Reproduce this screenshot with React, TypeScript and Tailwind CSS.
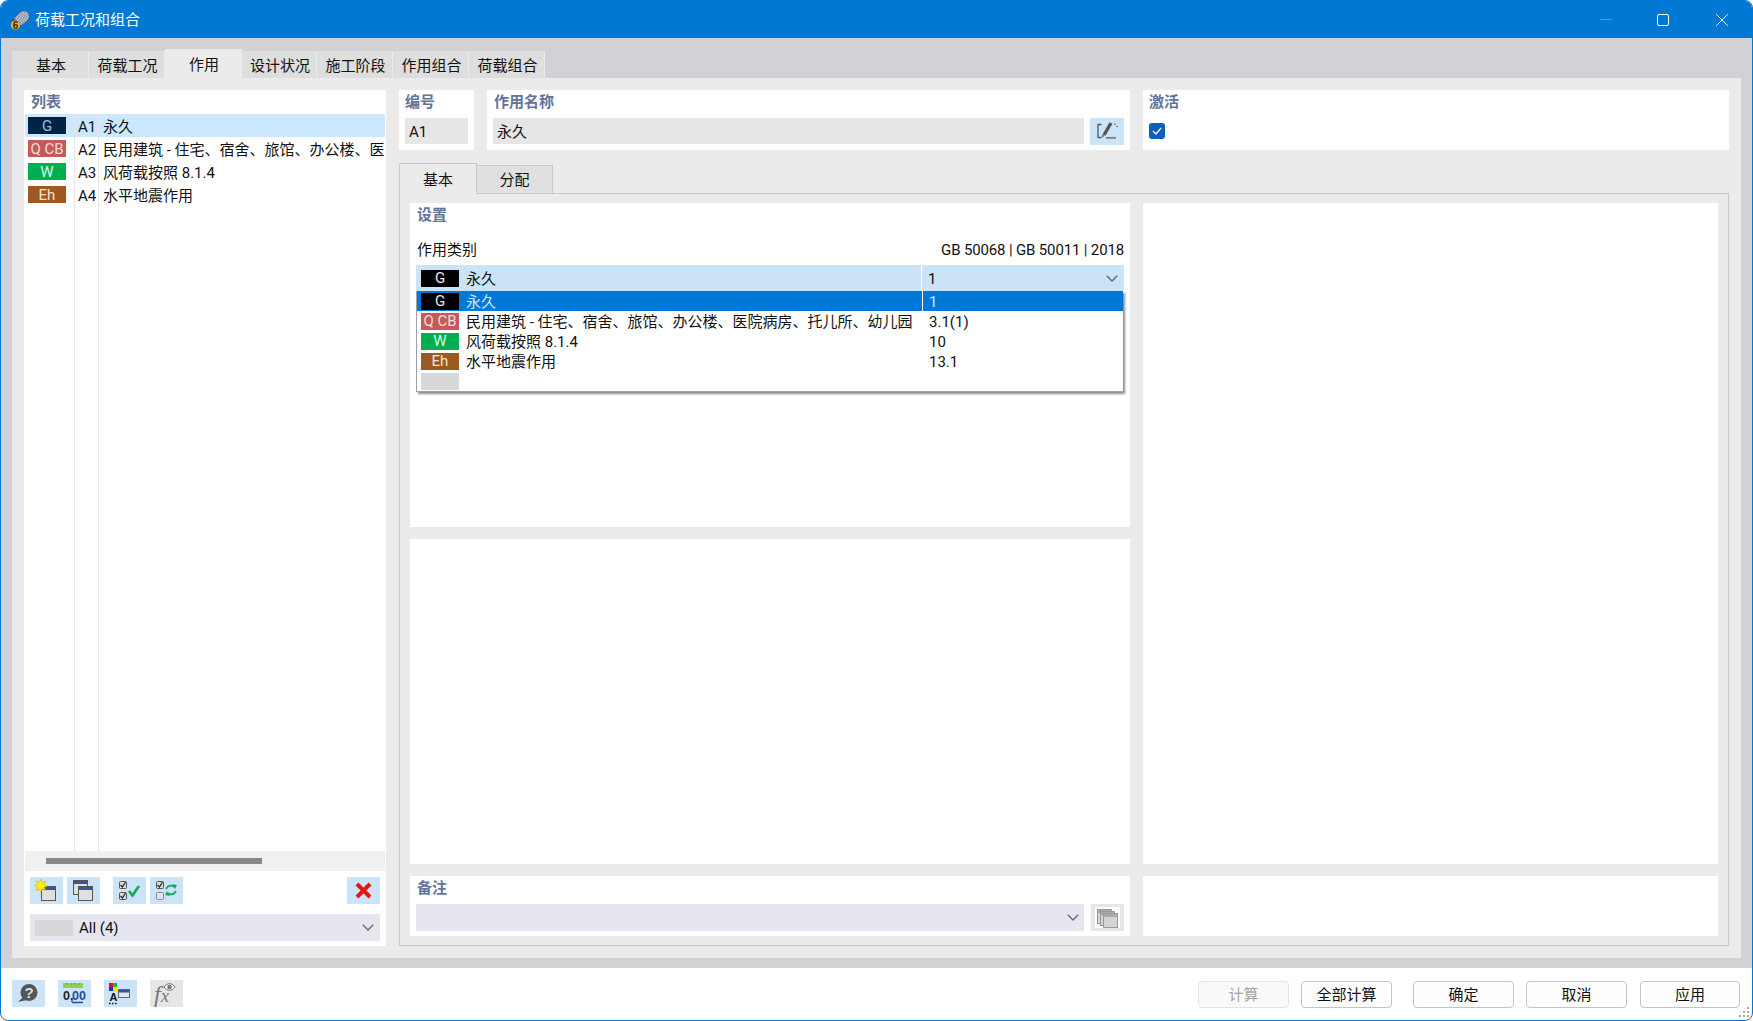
import { X } from "lucide-react";
import type { ReactNode } from "react";

type ActionRow = {
  code: string;
  id: string;
  list: string;
  name: string;
  swatch: string;
  value: string;
};

const rows: ActionRow[] = [
  { code: "G", id: "A1", list: "bg-[#002346] text-[#8ec4f2]", name: "永久", swatch: "bg-black text-[#e8e8e8]", value: "1" },
  { code: "Q CB", id: "A2", list: "bg-[#c55a5a] text-[#f8dcdc]", name: "民用建筑 - 住宅、宿舍、旅馆、办公楼、医院病房、托儿所、幼儿园", swatch: "bg-[#c55a5a] text-[#f8dcdc]", value: "3.1(1)" },
  { code: "W", id: "A3", list: "bg-[#00b050] text-[#dcf7e6]", name: "风荷载按照 8.1.4", swatch: "bg-[#00b050] text-[#dcf7e6]", value: "10" },
  { code: "Eh", id: "A4", list: "bg-[#9c5a22] text-[#f5e2cc]", name: "水平地震作用", swatch: "bg-[#9c5a22] text-[#f5e2cc]", value: "13.1" },
];

const mainTabs = [
  { label: "基本", cls: "w-[77px] h-[27px] bg-[#dedede]" },
  { label: "荷载工况", cls: "w-[76px] h-[27px] bg-[#dedede]" },
  { label: "作用", cls: "w-[77px] h-[29px] bg-[#ebebeb]" },
  { label: "设计状况", cls: "w-[75px] h-[27px] bg-[#dedede]" },
  { label: "施工阶段", cls: "w-[76px] h-[27px] bg-[#dedede]" },
  { label: "作用组合", cls: "w-[76px] h-[27px] bg-[#dedede]" },
  { label: "荷载组合", cls: "w-[76px] h-[27px] bg-[#dedede]" },
];

function Heading({ children }: { children: ReactNode }) {
  return <div className="h-[26px] leading-[24px] font-semibold text-[#64739a]">{children}</div>;
}

function Chevron() {
  return (
    <svg width="12" height="7" viewBox="0 0 12 7" fill="none" stroke="#666" strokeWidth="1.3">
      <path d="M.8.8 6 6l5.200-5.200" />
    </svg>
  );
}

function MiniWindow({ x, y, faded }: { x: number; y: number; faded?: boolean }) {
  return (
    <g>
      <rect x={x + 0.5} y={y + 0.5} width="14" height="14" fill={faded ? "#d4d4d4" : "#dfdfdf"} stroke={faded ? "#999" : "#555"} />
      <rect x={x + 1} y={y + 1} width="13" height="3" fill={faded ? "#aaa" : "#3f51a5"} />
    </g>
  );
}

function MiniCheck({ x, y, on = true }: { x: number; y: number; on?: boolean }) {
  return (
    <g>
      <rect x={x + 0.5} y={y + 0.5} width="7" height="7" rx="1" fill={on ? "#dcdcdc" : "#dde6ee"} stroke={on ? "#555" : "#888"} />
      {on && <path d={`M${x + 1.5} ${y + 4}l2 2 3-5`} fill="none" stroke="#222" strokeWidth="1.2" />}
    </g>
  );
}

function IconButton({ children, muted }: { children: ReactNode; muted?: boolean }) {
  return (
    <button className={`block h-[27px] w-[33px] shrink-0 ${muted ? "bg-[#e6e6e6]" : "bg-[#cce4f7]"}`}>
      <svg width="33" height="27" viewBox="0 0 33 27" className="block">
        {children}
      </svg>
    </button>
  );
}

function Swatch({ code, cls }: { code?: string; cls: string }) {
  return (
    <span className={`flex h-[17px] w-[38px] shrink-0 items-center justify-center pt-[1px] text-[15px] leading-none ${cls}`}>
      {code}
    </span>
  );
}

function AppIcon() {
  return (
    <svg width="20" height="20" viewBox="0 0 20 20">
      <defs>
        <pattern id="mesh" width="2.2" height="2.2" patternUnits="userSpaceOnUse" patternTransform="rotate(35)">
          <rect width="2.2" height="2.2" fill="#c3cbdc" />
          <path d="M0 0h2.2M0 0v2.2" stroke="#56627c" strokeWidth="0.7" />
        </pattern>
      </defs>
      <path d="M3 9 11 1.500c2.500-1.500 6-.5 7.500 2s1 5-.6 6.500L11 16Z" fill="url(#mesh)" stroke="#3c4456" strokeWidth="0.5" />
      <path d="M3 9c2.500-.5 7 3 8 7-2 1-6 1-7.500-1S2 10 3 9Z" fill="#3c4150" />
      <circle cx="5.500" cy="15" r="4.700" fill="#e3b52a" />
      <text x="5.500" y="18.500" textAnchor="middle" fontSize="10" fontWeight="700" fill="#2e2606" fontFamily="'Liberation Sans', sans-serif">6</text>
    </svg>
  );
}

function ListPanel() {
  return (
    <div className="flex w-[362px] shrink-0 flex-col bg-white">
      <div className="h-[24px] pl-[7px] leading-[24px] font-semibold text-[#64739a]">列表</div>
      <div className="flex flex-1 px-[1px]">
        <div className="w-[50px] shrink-0 border-r border-[#e2e6ea]">
          {rows.map((row, i) => (
            <div key={row.id} className={`flex h-[23px] items-center pl-[3px] ${i === 0 ? "bg-[#cce8ff]" : ""}`}>
              <Swatch code={row.code} cls={row.list} />
            </div>
          ))}
        </div>
        <div className="w-[24px] shrink-0 border-r border-[#e2e6ea]">
          {rows.map((row, i) => (
            <div key={row.id} className={`flex h-[23px] items-center justify-center pl-[1px] pt-[2px] ${i === 0 ? "bg-[#cce8ff]" : ""}`}>
              {row.id}
            </div>
          ))}
        </div>
        <div className="min-w-0 flex-1 overflow-hidden">
          {rows.map((row, i) => (
            <div key={row.id} className={`flex h-[23px] items-center whitespace-nowrap pl-[4px] pt-[2px] ${i === 0 ? "bg-[#cce8ff]" : ""}`}>
              {row.name}
            </div>
          ))}
        </div>
      </div>
      <div className="mx-[1px] flex h-[20px] items-center bg-[#f0f0f0] pl-[21px]">
        <div className="h-[6px] w-[216px] bg-[#888888]" />
      </div>
      <div className="flex h-[33px] px-[6px] pt-[6px]">
        <div className="flex gap-[4px]">
          <IconButton>
            <MiniWindow x={11} y={9} />
            <path d="M11 2l1.300 3.400 3.400-1.300-1.500 3.300 3.300 1.500-3.300 1.300 1.300 3.400-3.400-1.500-1.400 3.300-1.300-3.300-3.400 1.300 1.500-3.400-3.300-1.400 3.300-1.300-1.300-3.400 3.300 1.500z" fill="#fff200" stroke="#c9a800" strokeWidth="0.5" />
          </IconButton>
          <IconButton>
            <MiniWindow x={6} y={3} />
            <MiniWindow x={11} y={9} />
          </IconButton>
        </div>
        <div className="ml-[13px] flex gap-[4px]">
          <IconButton>
            <MiniCheck x={6} y={4} />
            <MiniCheck x={6} y={15} />
            <path d="M16 14l3.500 4.500L26 9" fill="none" stroke="#1aa85f" strokeWidth="2.800" />
          </IconButton>
          <IconButton>
            <MiniCheck x={6} y={4} />
            <MiniCheck x={6} y={15} on={false} />
            <path d="M16 12c2-4 6-4 8-2M26 14c-2 4-6 4-8 2" fill="none" stroke="#1aa85f" strokeWidth="1.800" />
            <path d="M22 7l5 1-2 4zM20 19l-5-1 2-4z" fill="#1aa85f" />
          </IconButton>
        </div>
        <div className="ml-auto flex">
          <IconButton>
            <path d="M10 7l13 13M23 7 10 20" stroke="#ee1111" strokeWidth="4" />
          </IconButton>
        </div>
      </div>
      <div className="mx-[6px] mt-[10px] mb-[5px] flex h-[27px] items-center bg-[#e6e6f0] pl-[5px] pr-[6px]">
        <span className="h-[16px] w-[38px] bg-[#d8d8d8]" />
        <span className="ml-[6px]">All (4)</span>
        <span className="ml-auto flex"><Chevron /></span>
      </div>
    </div>
  );
}

function CategoryPicker() {
  return (
    <div className="relative">
      <div className="flex h-[26px] items-center bg-[#cbe3f7]">
        <div className="flex w-[505px] shrink-0 items-center gap-[7px] pl-[5px]">
          <Swatch code="G" cls="bg-black text-[#e8e8e8]" />
          <span className="pt-[2px]">永久</span>
        </div>
        <div className="flex h-full flex-1 items-center border-l border-white pl-[6px] pt-[2px]">1</div>
        <span className="flex pr-[6px]"><Chevron /></span>
      </div>
      <div className="absolute left-0 right-[1px] top-[26px] z-20 border-b border-l border-[#a0a0a0] bg-white shadow-[2px_2px_2px_rgba(0,0,0,0.45)]">
        {rows.map((row, i) => (
          <div key={row.id} className={`flex h-[20px] items-center ${i === 0 ? "bg-[#0078d7] text-[#d4e8fa]" : ""}`}>
            <div className="flex w-[505px] shrink-0 items-center gap-[7px] overflow-hidden whitespace-nowrap pl-[4px]">
              <Swatch code={row.code} cls={row.swatch} />
              <span className="pt-[2px]">{row.name}</span>
            </div>
            <div className={`flex h-full flex-1 items-center pl-[6px] pt-[2px] ${i === 0 ? "border-l border-white" : "border-l border-transparent"}`}>{row.value}</div>
          </div>
        ))}
        <div className="flex h-[20px] items-center pl-[4px]">
          <Swatch cls="bg-[#d8d8d8]" />
        </div>
      </div>
    </div>
  );
}

function DetailPanel() {
  return (
    <div className="flex min-w-0 flex-1 flex-col">
      <div className="flex h-[60px] gap-[13px]">
        <div className="w-[75px] shrink-0 bg-white px-[6px]">
          <Heading>编号</Heading>
          <div className="mt-[2px] flex h-[26px] items-center bg-[#e6e6e6] pl-[4px] pt-[2px]">A1</div>
        </div>
        <div className="w-[643px] shrink-0 bg-white px-[6px]">
          <div className="pl-[1px]">
            <Heading>作用名称</Heading>
          </div>
          <div className="mt-[2px] flex gap-[6px]">
            <div className="flex h-[26px] flex-1 items-center bg-[#e6e6e6] pl-[4px] pt-[2px]">永久</div>
            <button className="block h-[27px] w-[34px] bg-[#cce4f7]">
              <svg width="34" height="27" viewBox="0 0 34 27" className="block">
                <path d="M11.500 6.500H8v13h3.500M16 19.800h10" fill="none" stroke="#555" strokeWidth="1.300" />
                <path d="M21 5l-7 12" fill="none" stroke="#555" strokeWidth="3.400" />
                <path d="M12.300 16.500l-.5 3 2.600-1.500z" fill="#555" />
                <path d="M25 5.500v1.500M26.500 8.500h1.500" stroke="#555" strokeWidth="1" />
              </svg>
            </button>
          </div>
        </div>
        <div className="flex-1 bg-white px-[6px]">
          <Heading>激活</Heading>
          <div className="mt-[7px] flex h-[16px] w-[16px] items-center justify-center rounded-[3px] bg-[#0a5fbf]">
            <svg width="10" height="8" viewBox="0 0 10 8" fill="none" stroke="#fff" strokeWidth="1.200">
              <path d="M1 4l3 3 5-6" />
            </svg>
          </div>
        </div>
      </div>

      <div className="mt-[13px] flex h-[30px] items-end">
        <div className="z-10 -mb-[1px] flex h-[31px] w-[78px] items-center justify-center border-x border-t border-[#c8c8d0] bg-[#ebebeb] pt-[2px]">基本</div>
        <div className="flex h-[28px] w-[76px] items-center justify-center border-r border-t border-[#c8c8d0] bg-[#e0e0e0]">分配</div>
      </div>
      <div className="grid flex-1 grid-cols-[720px_575px] grid-rows-[324px_325px_60px] gap-x-[13px] gap-y-[12px] border border-[#c8c8d0] px-[10px] pt-[9px]">
        <div className="bg-white px-[6px]">
          <div className="h-[26px] pl-[1px] leading-[24px] font-semibold text-[#64739a]">设置</div>
          <div className="mt-[11px] mb-[5px] flex h-[20px] items-center justify-between px-[1px]">
            <span>作用类别</span>
            <span className="-mr-[1px] tracking-[-0.15px]">GB 50068 | GB 50011 | 2018</span>
          </div>
          <CategoryPicker />
        </div>
        <div className="row-span-2 bg-white" />
        <div className="bg-white" />
        <div className="bg-white px-[6px]">
          <div className="h-[28px] pl-[1px] leading-[24px] font-semibold text-[#64739a]">备注</div>
          <div className="flex gap-[7px]">
            <div className="flex h-[27px] w-[668px] shrink-0 items-center justify-end bg-[#e6e6f0] pr-[5px]"><Chevron /></div>
            <button className="flex h-[27px] w-[33px] items-center justify-center bg-[#e6e6e6]">
              <svg width="25" height="21" viewBox="0 0 25 21" className="block bg-white">
                <MiniWindow x={2} y={2} faded />
                <MiniWindow x={5} y={4} faded />
                <MiniWindow x={8} y={6} faded />
              </svg>
            </button>
          </div>
        </div>
        <div className="bg-white" />
      </div>
    </div>
  );
}

export default function App() {
  return (
    <div className="relative flex h-[1021px] w-[1753px] flex-col overflow-hidden rounded-[8px] border border-[#0078d4] bg-white font-['Roboto','Noto_Sans_CJK_SC',sans-serif] text-[15px] leading-[20px] text-[#111]">
      <header className="flex h-[37px] shrink-0 items-center bg-[#0078d4] pl-[9px] text-white">
        <AppIcon />
        <span className="ml-[5px] pt-[1px]">荷载工况和组合</span>
        <div className="ml-auto flex pr-[1px]">
          <span className="flex h-[36px] w-[58px] items-center justify-center">
            <span className="h-[1px] w-[12px] bg-[#4a9ae0]" />
          </span>
          <span className="flex h-[36px] w-[58px] items-center justify-center pr-[2px]">
            <span className="h-[12px] w-[12px] rounded-[2px] border border-white" />
          </span>
          <span className="flex h-[36px] w-[58px] items-center justify-center">
            <X size={22} strokeWidth={1} color="#fff" />
          </span>
        </div>
      </header>

      <div className="flex min-h-0 flex-1 flex-col bg-[#d2d1d5] px-[11px] pt-[11px] pb-[10px]">
        <div className="flex h-[29px] shrink-0 items-end">
          {mainTabs.map((tab) => (
            <div key={tab.label} className={`flex items-center justify-center border-r border-[#ebebeb] pl-[2px] pt-[2px] ${tab.cls}`}>
              {tab.label}
            </div>
          ))}
        </div>
        <div className="flex min-h-0 flex-1 gap-[13px] bg-[#ebebeb] p-[12px]">
          <ListPanel />
          <DetailPanel />
        </div>
      </div>

      <footer className="flex h-[52px] shrink-0 items-start pl-[11px] pr-[12px] pt-[12px]">
        <div className="flex gap-[13px]">
          <IconButton>
            <circle cx="17" cy="12.500" r="8.500" fill="#555" />
            <path d="M11 17l-5 5 9-2z" fill="#555" />
            <text x="17" y="18" textAnchor="middle" fontSize="15" fontWeight="700" fill="#cce4f7" fontFamily="'Liberation Sans', sans-serif">?</text>
          </IconButton>
          <IconButton>
            <rect x="5" y="3" width="20" height="5" fill="#92d050" />
            <path d="M9 3v2M13 3v2M17 3v2M21 3v2" stroke="#5d9a2c" strokeWidth="0.8" />
            <text x="5" y="20" fontSize="12.500" fontWeight="700" fill="#222" fontFamily="'Liberation Sans', sans-serif">0,</text>
            <text x="14" y="20" fontSize="12.500" fontWeight="700" fill="#2a4a9a" fontFamily="'Liberation Sans', sans-serif">00</text>
            <path d="M14 22.500h11" stroke="#2a4a9a" strokeWidth="1.300" />
          </IconButton>
          <IconButton>
            <rect x="5" y="3" width="4" height="4" fill="#ee1111" />
            <rect x="9" y="3" width="4" height="4" fill="#22b14c" />
            <rect x="5" y="7" width="4" height="4" fill="#1133dd" />
            <rect x="9" y="7" width="4" height="4" fill="#ffe000" />
            <text x="5.500" y="21" fontSize="11" fontWeight="700" fill="#111" fontFamily="'Liberation Sans', sans-serif">A</text>
            <path d="M5 23.500h1.500M8 23.500h1.500M11 23.500h1.500" stroke="#111" strokeWidth="1.500" />
            <rect x="14.500" y="9.500" width="11" height="8" fill="#e6e6e6" stroke="#666" />
            <rect x="15" y="10" width="10" height="2.500" fill="#3f51a5" />
          </IconButton>
          <IconButton muted>
            <text x="4" y="22" fontSize="24" fontStyle="italic" fill="#777" fontFamily="'Liberation Serif', serif">f</text>
            <text x="11" y="22" fontSize="18" fontStyle="italic" fill="#777" fontFamily="'Liberation Serif', serif">x</text>
            <path d="M14 7c3-4.500 8-4.500 11 0-3 4.500-8 4.500-11 0z" fill="#f0f0f0" stroke="#777" strokeWidth="1" />
            <circle cx="19.500" cy="7" r="2.200" fill="#777" />
          </IconButton>
        </div>
        <div className="ml-auto mt-[1px] flex text-center">
          <button className="h-[27px] w-[91px] rounded-[4px] border border-[#e4e4e4] bg-[#fafafa] text-[#a6a6a6]">计算</button>
          <button className="ml-[12px] h-[27px] w-[91px] rounded-[4px] border border-[#c4c4c4] bg-[#fdfdfd]">全部计算</button>
          <button className="ml-[21px] h-[27px] w-[101px] rounded-[4px] border border-[#c4c4c4] bg-[#fdfdfd]">确定</button>
          <button className="ml-[12px] h-[27px] w-[101px] rounded-[4px] border border-[#c4c4c4] bg-[#fdfdfd]">取消</button>
          <button className="ml-[13px] h-[27px] w-[100px] rounded-[4px] border border-[#c4c4c4] bg-[#fdfdfd]">应用</button>
        </div>
      </footer>

      <svg width="12" height="12" viewBox="0 0 12 12" className="absolute bottom-[1px] right-[1px]" fill="#a8a8a8">
        <rect x="8" y="0" width="2" height="2" />
        <rect x="4" y="4" width="2" height="2" />
        <rect x="8" y="4" width="2" height="2" />
        <rect x="0" y="8" width="2" height="2" />
        <rect x="4" y="8" width="2" height="2" />
        <rect x="8" y="8" width="2" height="2" />
      </svg>
    </div>
  );
}
